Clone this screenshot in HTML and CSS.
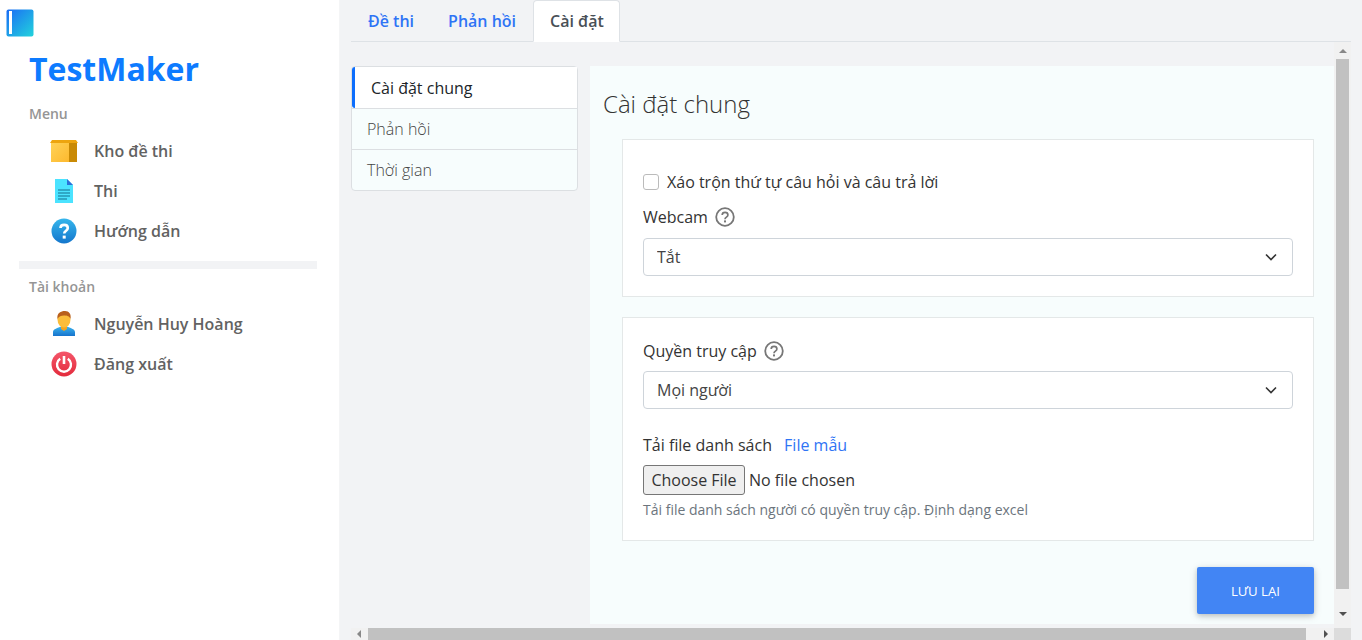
FILE: index.html
```html
<!DOCTYPE html>
<html lang="vi">
<head>
  <meta charset="UTF-8" />
  <title>TestMaker</title>
  <link rel="stylesheet" href="styles.css">
</head>
<body>

<!-- Sidebar -->
<aside class="sidebar">
  <svg class="logo" width="28" height="28" viewBox="0 0 28 28">
    <defs>
      <linearGradient id="logoGrad" x1="0" y1="0" x2="1" y2="1">
        <stop offset="0" stop-color="#1a6cf5" />
        <stop offset="1" stop-color="#22d3dc" />
      </linearGradient>
    </defs>
    <rect x="0.5" y="0.5" width="27" height="27" rx="2" fill="url(#logoGrad)" />
    <rect x="3" y="2" width="3" height="23" fill="#fff" />
  </svg>
  <div class="brand">TestMaker</div>

  <div class="side-label">Menu</div>
  <a class="side-link">
    <span class="side-icon">
      <svg width="28" height="22" viewBox="0 0 28 22">
        <defs>
          <linearGradient id="boxGrad" x1="0" y1="0" x2="1" y2="1">
            <stop offset="0" stop-color="#ffd257" />
            <stop offset="1" stop-color="#fdb92e" />
          </linearGradient>
        </defs>
        <rect x="1" y="3" width="18" height="19" fill="url(#boxGrad)" />
        <rect x="19" y="3" width="8" height="19" fill="#c98a05" />
        <path d="M0 3 L2 0 H26 L28 3 Z" fill="#eda50f" />
      </svg>
    </span>
    Kho đề thi
  </a>
  <a class="side-link">
    <span class="side-icon">
      <svg width="20" height="24" viewBox="0 0 20 24">
        <path d="M1 0 H13 L19 6 V24 H1 Z" fill="#4be3ff" />
        <path d="M13 0 L19 6 H13 Z" fill="#2c6fd8" />
        <path d="M4 11 H16 M4 14 H16 M4 17 H16 M4 20 H13" stroke="#14708f" stroke-width="1.2" />
      </svg>
    </span>
    Thi
  </a>
  <a class="side-link">
    <span class="side-icon">
      <svg width="26" height="26" viewBox="0 0 26 26">
        <defs>
          <linearGradient id="helpGrad" x1="0" y1="0" x2="0" y2="1">
            <stop offset="0" stop-color="#35b6ec" />
            <stop offset="1" stop-color="#1476cc" />
          </linearGradient>
        </defs>
        <circle cx="13" cy="13" r="12.5" fill="url(#helpGrad)" />
        <path d="M9.5 10 C9.5 5.8 16.8 5.8 16.8 10 C16.8 12.8 13.2 12.6 13.2 15.6" fill="none" stroke="#fff" stroke-width="2.6" />
        <rect x="11.7" y="17.6" width="3" height="3" fill="#fff" />
      </svg>
    </span>
    Hướng dẫn
  </a>

  <div class="side-divider"></div>

  <div class="side-label">Tài khoản</div>
  <a class="side-link">
    <span class="side-icon">
      <svg width="24" height="26" viewBox="0 0 24 26">
        <defs>
          <linearGradient id="shirtGrad" x1="0" y1="0" x2="0" y2="1">
            <stop offset="0" stop-color="#3bb4ee" />
            <stop offset="1" stop-color="#1673cc" />
          </linearGradient>
        </defs>
        <path d="M1 25 V21 C1 18 6 17 9 15.5 H15 C18 17 23 18 23 21 V25 Z" fill="url(#shirtGrad)" />
        <path d="M9 14 H15 V18 L12 20 L9 18 Z" fill="#f2a51f" />
        <ellipse cx="12" cy="8.5" rx="6.5" ry="8" fill="#fbbd3a" />
        <path d="M5.5 8 C4.5 2 9 0 13 0 C17 0 19.5 3 18.5 8 C17.5 5 15 4.5 12 4.5 C9 4.5 7 5 5.5 8 Z" fill="#b9601c" />
      </svg>
    </span>
    Nguyễn Huy Hoàng
  </a>
  <a class="side-link">
    <span class="side-icon">
      <svg width="26" height="26" viewBox="0 0 26 26">
        <defs>
          <linearGradient id="powerGrad" x1="0" y1="0" x2="0" y2="1">
            <stop offset="0" stop-color="#f4566a" />
            <stop offset="1" stop-color="#e32b3c" />
          </linearGradient>
        </defs>
        <circle cx="13" cy="13" r="12.5" fill="url(#powerGrad)" />
        <path d="M9.2 7.8 A7 7 0 1 0 16.8 7.8" fill="none" stroke="#fff" stroke-width="2.4" />
        <path d="M13 5 V13" stroke="#fff" stroke-width="2.6" />
      </svg>
    </span>
    Đăng xuất
  </a>
</aside>

<!-- Main -->
<main class="main">
  <nav class="tabs">
    <a class="tab">Đề thi</a>
    <a class="tab">Phản hồi</a>
    <a class="tab active">Cài đặt</a>
  </nav>

  <div class="scroll-area">
    <div class="content">
      <ul class="subnav">
        <li class="subnav-item current">Cài đặt chung</li>
        <li class="subnav-item">Phản hồi</li>
        <li class="subnav-item">Thời gian</li>
      </ul>

      <section class="panel">
        <h2 class="panel-title">Cài đặt chung</h2>

        <div class="card card-general">
          <label class="check-row">
            <input type="checkbox" class="check" />
            Xáo trộn thứ tự câu hỏi và câu trả lời
          </label>
          <div class="field-label">
            Webcam
            <svg class="hint" width="20" height="20" viewBox="0 0 20 20">
              <circle cx="10" cy="10" r="8.8" fill="none" stroke="#777" stroke-width="1.8" />
              <path d="M7.2 8 C7.2 4.6 12.9 4.6 12.9 8 C12.9 10.2 10 10 10 12.2" fill="none" stroke="#777" stroke-width="1.7" />
              <rect x="9" y="13.4" width="2" height="2" fill="#777" />
            </svg>
          </div>
          <select class="select">
            <option>Tắt</option>
          </select>
        </div>

        <div class="card card-access">
          <div class="field-label">
            Quyền truy cập
            <svg class="hint" width="20" height="20" viewBox="0 0 20 20">
              <circle cx="10" cy="10" r="8.8" fill="none" stroke="#777" stroke-width="1.8" />
              <path d="M7.2 8 C7.2 4.6 12.9 4.6 12.9 8 C12.9 10.2 10 10 10 12.2" fill="none" stroke="#777" stroke-width="1.7" />
              <rect x="9" y="13.4" width="2" height="2" fill="#777" />
            </svg>
          </div>
          <select class="select">
            <option>Mọi người</option>
          </select>

          <div class="file-label">Tải file danh sách <a class="file-link">File mẫu</a></div>
          <input type="file" class="file-input" />
          <small class="file-hint">Tải file danh sách người có quyền truy cập. Định dạng excel</small>
        </div>

        <div class="actions">
          <button class="btn-save">Lưu lại</button>
        </div>
      </section>
    </div>

    <!-- scrollbars -->
    <div class="vbar">
      <span class="arrow-up"></span>
      <div class="vbar-thumb"></div>
      <span class="arrow-down"></span>
    </div>
    <div class="hbar">
      <span class="arrow-left"></span>
      <div class="hbar-thumb"></div>
      <span class="arrow-right"></span>
    </div>
    <div class="bar-corner"></div>
  </div>
</main>

</body>
</html>
```

FILE: styles.css
```css
* {
  box-sizing: border-box;
}

html, body {
  margin: 0;
  padding: 0;
  width: 100%;
  height: 100%;
  overflow: hidden;
}

body {
  display: flex;
  font-family: 'Open Sans', sans-serif;
  font-size: 16px;
  color: #444;
  background: #f2f3f5;
}

/* Sidebar */
.sidebar {
  width: 340px;
  flex-shrink: 0;
  padding: 9px 0 0;
  background: #fff;
  border-right: 1px solid #f4f5f6;
}

.logo {
  display: block;
  margin-left: 6px;
}

.brand {
  margin: 5px 0 0 29px;
  font-size: 32px;
  line-height: 54px;
  font-weight: 700;
  color: #0d7bff;
}

.side-label {
  margin-left: 29px;
  font-size: 14px;
  line-height: 20px;
  font-weight: 600;
  color: #959595;
}

.sidebar .brand + .side-label {
  margin-top: 8px;
}

.side-link {
  display: flex;
  align-items: center;
  height: 40px;
  padding-left: 50px;
  font-size: 16px;
  font-weight: 600;
  color: #626262;
}

.brand + .side-label + .side-link {
  margin-top: 7px;
}

.side-icon {
  width: 28px;
  margin-right: 16px;
  display: flex;
  justify-content: center;
  align-items: center;
}

.side-divider {
  height: 8px;
  margin: 10px 22px 8px 19px;
  background: #f2f3f5;
}

.side-divider + .side-label + .side-link {
  margin-top: 7px;
}

/* Main */
.main {
  flex: 1;
  min-width: 0;
  padding: 0 11px;
  display: flex;
  flex-direction: column;
}

.tabs {
  display: flex;
  height: 42px;
  border-bottom: 1px solid #dee2e6;
}

.tab {
  height: 42px;
  padding: 8px 16px;
  border: 1px solid transparent;
  border-radius: 4px 4px 0 0;
  font-weight: 600;
  line-height: 24px;
  color: #2f74f5;
}

.tab.active {
  width: 87px;
  white-space: nowrap;
  background: #fff;
  color: #495057;
  border-color: #dee2e6 #dee2e6 #fff;
}

.scroll-area {
  flex: 1;
  min-height: 0;
  display: grid;
  grid-template-columns: 1fr 17px;
  grid-template-rows: 1fr 12px;
}

.content {
  display: flex;
  align-items: flex-start;
  padding-top: 24px;
  overflow: hidden;
}

/* Left list */
.subnav {
  width: 227px;
  margin: 0 12px 0 0;
  padding: 0;
  list-style: none;
  background: #f7fdfd;
  border: 1px solid #dcdfe2;
  border-radius: 4px;
  flex-shrink: 0;
}

.subnav-item {
  height: 41px;
  padding-left: 15px;
  line-height: 40px;
  font-weight: 300;
  color: #444;
  border-top: 1px solid #dcdfe2;
}

.subnav-item:first-child {
  border-top: none;
}

.subnav-item.current {
  height: 41px;
  padding-left: 16px;
  line-height: 42px;
  background: #fff;
  border-left: 3px solid #0d6efd;
  border-radius: 3px 0 0 3px;
  font-weight: 400;
  color: #212529;
}

/* Right panel */
.panel {
  flex: 1;
  height: 558px;
  padding: 21px 20px 0 13px;
  background: #f7fdfd;
}

.panel-title {
  margin: 0 0 18px;
  font-size: 24px;
  line-height: 34px;
  font-weight: 300;
  color: #333;
}

.card {
  margin-left: 19px;
  padding: 0 20px;
  background: #fff;
  border: 1px solid #e4e8e8;
}

.card-general {
  height: 158px;
  padding-top: 30px;
  margin-bottom: 20px;
}

.card-access {
  height: 224px;
  padding-top: 21px;
}

.card-access .field-label {
  margin-bottom: 8px;
}

.check-row {
  display: flex;
  align-items: center;
  height: 24px;
  margin-bottom: 11px;
  color: #333;
}

.check {
  appearance: none;
  width: 16px;
  height: 16px;
  margin: 0 8px 0 0;
  background: #fff;
  border: 1px solid #bbb;
  border-radius: 3px;
}

.field-label {
  display: flex;
  align-items: center;
  gap: 7px;
  height: 24px;
  margin-bottom: 9px;
  color: #333;
}

.select {
  display: block;
  width: 100%;
  height: 38px;
  padding: 0 13px;
  appearance: none;
  font: inherit;
  color: #444;
  background: #fff url("data:image/svg+xml;utf8,<svg xmlns='http://www.w3.org/2000/svg' width='12' height='8' viewBox='0 0 12 8'><path d='M1 1.5 L6 6.5 L11 1.5' fill='none' stroke='%23333' stroke-width='1.6'/></svg>") no-repeat right 15px center;
  border: 1px solid #ced4da;
  border-radius: 4px;
}

.file-label {
  margin-top: 24px;
  height: 24px;
  line-height: 24px;
  color: #333;
}

.file-link {
  margin-left: 8px;
  color: #2f74f5;
}

.file-input {
  display: block;
  height: 30px;
  margin-top: 8px;
  font-family: inherit;
  font-size: 16px;
  color: #333;
}

.file-input::file-selector-button {
  width: 102px;
  height: 30px;
  margin-right: 4px;
  padding: 0;
  font-family: inherit;
  font-size: 16px;
  color: #333;
  background: #efefef;
  border: 1px solid #767676;
  border-radius: 3px;
}

.file-hint {
  display: block;
  margin-top: 4px;
  font-size: 14px;
  line-height: 21px;
  color: #6c757d;
}

.actions {
  display: flex;
  justify-content: flex-end;
  margin-top: 26px;
}

.btn-save {
  width: 117px;
  height: 47px;
  border: none;
  border-radius: 2px;
  background: #4285f4;
  color: #fff;
  font-family: inherit;
  font-size: 13.2px;
  text-transform: uppercase;
  box-shadow: 0 2px 5px rgba(0,0,0,0.16), 0 2px 10px rgba(0,0,0,0.12);
}

/* Scrollbars */
.vbar {
  display: flex;
  flex-direction: column;
  align-items: center;
  width: 17px;
  background: #f1f1f1;
  padding-top: 7px;
}

.vbar-thumb {
  width: 13px;
  height: 530px;
  margin-top: 6px;
  background: #c1c1c1;
}

.arrow-up {
  width: 0;
  height: 0;
  border: 4px solid transparent;
  border-top: none;
  border-bottom: 4px solid #888;
}

.arrow-down {
  width: 0;
  height: 0;
  margin-top: 23px;
  border: 4px solid transparent;
  border-bottom: none;
  border-top: 4px solid #505050;
}

.hbar {
  display: flex;
  align-items: center;
  background: #f1f1f1;
}

.hbar-thumb {
  width: 938px;
  height: 12px;
  margin-left: 7px;
  background: #c1c1c1;
}

.arrow-left {
  width: 0;
  height: 0;
  margin-left: 6px;
  border: 4px solid transparent;
  border-left: none;
  border-right: 4px solid #888;
}

.arrow-right {
  width: 0;
  height: 0;
  margin-left: 18px;
  border: 4px solid transparent;
  border-right: none;
  border-left: 4px solid #505050;
}

.bar-corner {
  background: #dcdcdc;
}
```
